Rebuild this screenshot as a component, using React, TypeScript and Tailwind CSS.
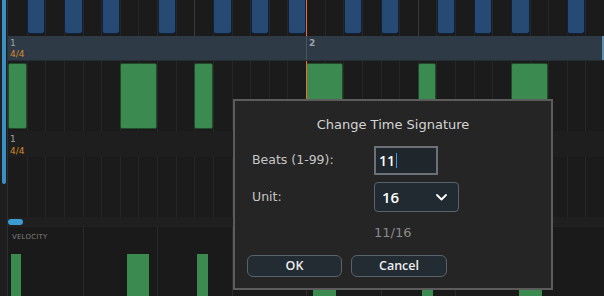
import React from "react";

const CELL = 18.625;
const cells = Array.from({ length: 32 }, (_, i) => i);

function GridLines({ every = 1, color = "border-[#262626]", accents = [] as number[] }) {
  return (
    <div className="absolute inset-0 flex">
      {cells.map((k) => (
        <div
          key={k}
          className={`h-full w-[18.625px] shrink-0 ${
            k % every === 0 && k !== 0
              ? accents.includes(k)
                ? "border-l border-[#3a3a3a]"
                : `border-l ${color}`
              : ""
          }`}
        />
      ))}
    </div>
  );
}

const blueNotes = [1, 3, 5, 8, 11, 13, 15, 18, 20, 23, 25, 27, 30];
const greenNotes: [number, number][] = [
  [0, 1],
  [6, 2],
  [10, 1],
  [16, 2],
  [22, 1],
  [27, 2],
];
const velBars: [number, number][] = [
  [3, 10],
  [119, 22],
  [189, 11],
  [305, 23],
  [414, 11],
  [511, 23],
];

const semi = { fontFamily: '"Open Sans", "DejaVu Sans", sans-serif' };

export default function App() {
  return (
    <div
      className="relative flex h-[296px] w-[604px] overflow-hidden bg-[#1b1b1b]"
      style={{ fontFamily: '"DejaVu Sans", "Liberation Sans", sans-serif' }}
    >
      {/* left gutter */}
      <div className="flex h-full w-[8px] shrink-0 bg-[#1e1e1e]">
        <div className="ml-[2px] h-[184px] w-[4px] rounded-b-[2px] bg-[#3a90c2]" />
        <div className="ml-[1px] h-full w-[1px] bg-[#2e2e2e]" />
      </div>

      {/* main */}
      <div className="flex h-full w-[596px] flex-col">
        {/* top lane */}
        <div className="relative h-[36px] shrink-0 bg-[#1b1b1b]">
          <GridLines accents={[10, 22]} />
          {blueNotes.map((k) => (
            <div
              key={k}
              className="absolute top-0 h-[34px] rounded-b-[3px] border border-t-0 border-[#10213a] bg-[#264a74]"
              style={{ left: k * CELL + 0.5, width: CELL - 0.5 }}
            />
          ))}
          <div className="absolute top-0 h-full w-[1px] bg-[#f26a2e]" style={{ left: 16 * CELL }} />
        </div>

        {/* ruler */}
        <div className="relative flex h-[25px] shrink-0 border-b border-[#252c33] bg-[#2e3a45]">
          <div className="flex w-[298px] flex-col pl-[2px] pt-[2px] text-[9px] leading-[11px]">
            <span className="text-[#9ba3aa]">1</span>
            <span className="text-[#d98a2c]">4/4</span>
          </div>
          <div className="flex flex-1 border-l border-[#4a545d] pl-[2px] pt-[2px] text-[9px] font-bold leading-[11px] text-[#9ba3aa]">
            2
          </div>
          <div className="w-[2px] bg-[#5f8fae]" />
        </div>

        {/* green lane */}
        <div className="relative h-[70px] shrink-0 bg-[#1b1b1b]">
          <GridLines />
          {greenNotes.map(([k, len]) => (
            <div
              key={k}
              className="absolute top-[2px] h-[66px] rounded-[2px] border border-[#1f4a2b] bg-[#3b8b51]"
              style={{ left: k * CELL, width: len * CELL }}
            />
          ))}
          <div className="absolute top-0 h-full w-[1px] bg-[#f26a2e]" style={{ left: 16 * CELL }} />
        </div>

        {/* second header */}
        <div className="flex h-[26px] shrink-0 flex-col bg-[#1e1e1e] pl-[2px] pt-[2px] text-[9px] leading-[12px]">
          <span className="text-[#9ba3aa]">1</span>
          <span className="text-[#d98a2c]">4/4</span>
        </div>

        {/* second lane */}
        <div className="relative h-[60px] shrink-0 bg-[#1b1b1b]">
          <GridLines />
        </div>

        {/* scroller band */}
        <div className="flex h-[9px] shrink-0 items-center bg-[#1f1f1f]">
          <div className="h-[6px] w-[15px] rounded-full bg-[#3c9bd1]" />
        </div>

        {/* velocity */}
        <div className="relative flex-1 border-t border-[#222] bg-[#1a1a1a]">
          <GridLines every={4} color="border-[#2a2a2a]" />
          <div className="relative pl-[4px] pt-[6px] text-[7px] leading-[9px] tracking-[0.2px] text-[#7d7d7d]">
            VELOCITY
          </div>
          {velBars.map(([x, w]) => (
            <div
              key={x}
              className="absolute bottom-0 top-[27px] bg-[#3b8b51]"
              style={{ left: x, width: w }}
            />
          ))}
        </div>
      </div>

      {/* dialog */}
      <div className="absolute left-[233px] top-[99px] flex h-[191px] w-[320px] flex-col border-2 border-[#5c5c5c] bg-[#252525]">
        <div className="mt-[16px] text-center text-[13px] leading-[16px] text-[#d4d4d4]">
          Change Time Signature
        </div>
        <div className="mt-[13px] flex h-[29px] items-center">
          <span className="w-[139px] pl-[17px] text-[12.5px] text-[#c6c6c6]">Beats (1-99):</span>
          <div className="flex h-[29px] w-[64px] items-center border-2 border-[#6b7176] bg-[#1f272d] pl-[3px]">
            <span className="text-[14px] font-semibold text-white" style={semi}>11</span>
            <span className="ml-[1px] h-[15px] w-[1px] bg-[#3d9be0]" />
          </div>
        </div>
        <div className="mt-[7px] flex h-[30px] items-center">
          <span className="w-[139px] pl-[17px] text-[12.5px] text-[#c6c6c6]">Unit:</span>
          <div className="flex h-[30px] w-[85px] items-center justify-between rounded-[4px] border border-[#59636b] bg-[#212a31] pl-[7px] pr-[11px]">
            <span className="text-[15px] font-semibold text-white" style={semi}>16</span>
            <svg width="11" height="7" viewBox="0 0 11 7">
              <polyline points="1,1 5.5,5.5 10,1" fill="none" stroke="#ffffff" strokeWidth="1.8" strokeLinecap="round" strokeLinejoin="round" />
            </svg>
          </div>
        </div>
        <div className="mt-[13px] pl-[139px] text-[13px] leading-[16px] text-[#8a8a8a]">11/16</div>
        <div className="mt-[14px] flex gap-[9px] pl-[12px]">
          <div
            className="flex h-[22px] w-[95px] items-center justify-center rounded-[6px] border border-[#59636b] bg-[#232c33] text-[12.5px] font-semibold text-[#eeeeee]"
            style={semi}
          >
            OK
          </div>
          <div
            className="flex h-[22px] w-[96px] items-center justify-center rounded-[6px] border border-[#59636b] bg-[#232c33] text-[12.5px] font-semibold text-[#eeeeee]"
            style={semi}
          >
            Cancel
          </div>
        </div>
      </div>
    </div>
  );
}
